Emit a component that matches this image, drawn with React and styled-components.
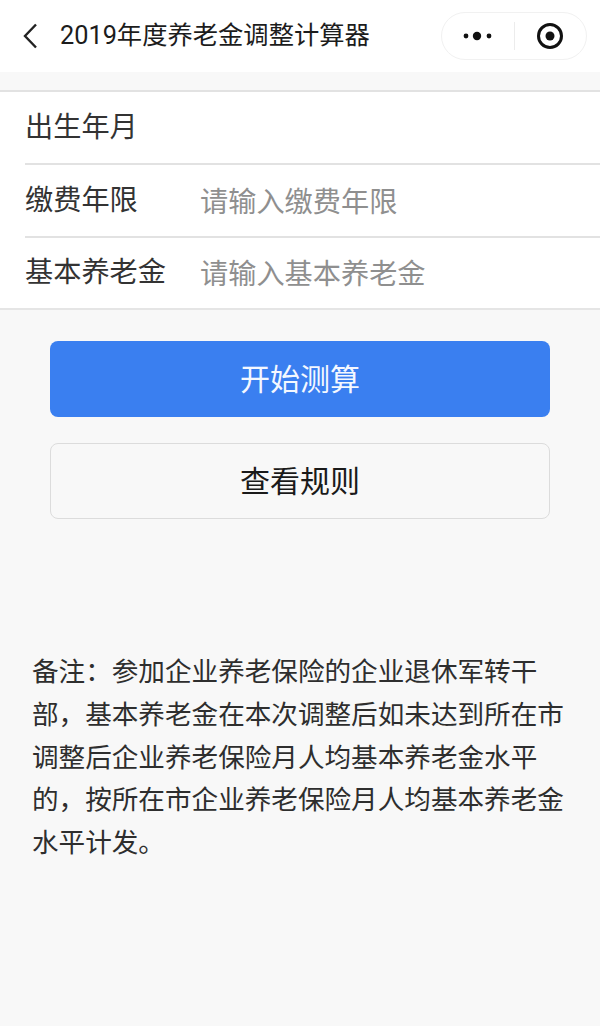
import React from "react";
import styled, { createGlobalStyle } from "styled-components";

const Global = createGlobalStyle`
  html, body { margin: 0; padding: 0; background: #f8f8f8; }
  body { font-family: "Noto Sans CJK SC", "Liberation Sans", sans-serif; }
  * { box-sizing: border-box; }
`;
const Page = styled.div`
  width: 600px; height: 1026px; overflow: hidden; background: #f8f8f8;
  display: flex; flex-direction: column;
`;
const NavBar = styled.header`
  height: 72px; background: #fff; display: flex; align-items: center;
  padding: 0 13px 0 20px; flex: none;
`;
const Back = styled.svg`
  width: 20px; height: 28px; flex: none; margin-top: -1px;
`;
const Title = styled.h1`
  margin: 0 0 0 20px; flex: 1; font-size: 25.3px; font-weight: 400; color: #1c1c1c;
  line-height: 32px; white-space: nowrap;
  font-family: "Roboto", "Noto Sans CJK SC", sans-serif;
`;
const Capsule = styled.div`
  width: 146px; height: 48px; border: 1px solid #f1f1f1; border-radius: 24px; background: #fff;
  display: flex; align-items: center;
`;
const CapSlot = styled.div`
  flex: 1; display: flex; align-items: center; justify-content: center;
`;
const CapDivider = styled.div`
  width: 1px; height: 28px; background: #ececec;
`;
const FormPanel = styled.section`
  margin-top: 18px; background: #fff; border-top: 2px solid #e2e2e2; border-bottom: 2px solid #e5e5e5;
  padding-left: 25px; flex: none;
`;
const Row = styled.div`
  height: ${p => p.$h}px; display: flex; align-items: center;
  border-bottom: ${p => (p.$last ? "none" : "2px solid #e2e2e2")};
`;
const Label = styled.div`
  width: 176px; flex: none; font-size: 28.2px; color: #333; line-height: 36px; margin-top: -6px;
`;
const Placeholder = styled.div`
  font-size: 28.2px; color: #8f8f8f; line-height: 36px; margin: -2px 0 0 -1px;
`;
const Actions = styled.div`
  padding: 31px 50px 0; display: flex; flex-direction: column; gap: 26px; flex: none;
`;
const Button = styled.button`
  width: 500px; height: 76px; border-radius: 8px; font: inherit; font-size: 30px; padding: 0 0 5px;
  background: ${p => (p.$primary ? "#3a7ff0" : "#f8f8f8")};
  color: ${p => (p.$primary ? "#f4f8ff" : "#1a1a1a")};
  border: ${p => (p.$primary ? "none" : "1px solid #dcdcdc")};
`;
const Note = styled.p`
  margin: 130px 30px 0 32px; font-size: 26.6px; line-height: 42.75px; color: #2e2e2e;
`;

export default function App() {
  return (
    <Page>
      <Global />
      <NavBar>
        <Back viewBox="0 0 20 28" fill="none" stroke="#222" strokeWidth="2.4">
          <path d="M16 2.5 L5 14 L16 25.5" />
        </Back>
        <Title>2019年度养老金调整计算器</Title>
        <Capsule>
          <CapSlot>
            <svg width="32" height="10" viewBox="0 0 32 10" fill="#111">
              <circle cx="4" cy="5" r="2.4" />
              <circle cx="15" cy="5" r="4.2" />
              <circle cx="27" cy="5" r="2.4" />
            </svg>
          </CapSlot>
          <CapDivider />
          <CapSlot>
            <svg width="28" height="28" viewBox="0 0 28 28">
              <circle cx="14" cy="14" r="11.5" fill="none" stroke="#111" strokeWidth="3" />
              <circle cx="14" cy="14" r="4.5" fill="#111" />
            </svg>
          </CapSlot>
        </Capsule>
      </NavBar>
      <FormPanel>
        <Row $h={73}><Label>出生年月</Label></Row>
        <Row $h={73}><Label>缴费年限</Label><Placeholder>请输入缴费年限</Placeholder></Row>
        <Row $h={70} $last><Label>基本养老金</Label><Placeholder>请输入基本养老金</Placeholder></Row>
      </FormPanel>
      <Actions>
        <Button $primary>开始测算</Button>
        <Button>查看规则</Button>
      </Actions>
      <Note>备注：参加企业养老保险的企业退休军转干部，基本养老金在本次调整后如未达到所在市调整后企业养老保险月人均基本养老金水平的，按所在市企业养老保险月人均基本养老金水平计发。</Note>
    </Page>
  );
}
